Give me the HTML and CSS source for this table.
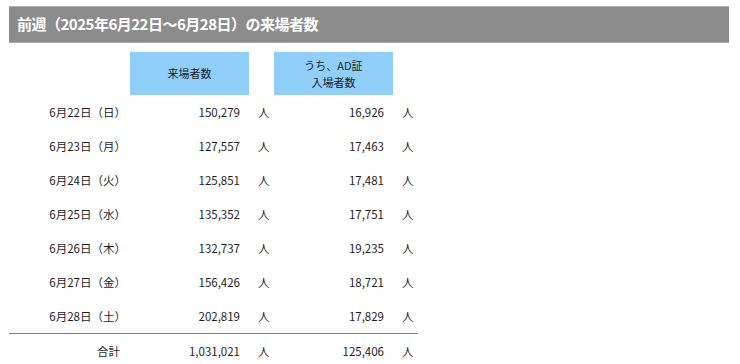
FILE: index.html
```html
<!DOCTYPE html>
<html lang="ja">
<head>
<meta charset="utf-8">
<link rel="stylesheet" href="styles.css">
</head>
<body>
<div class="page">
  <h1 class="title">前週（2025年6月22日～6月28日）の来場者数</h1>
  <div class="table">
    <div class="cell"></div>
    <div class="cell head">来場者数</div>
    <div class="cell"></div>
    <div class="cell head">うち、AD証<br>入場者数</div>
    <div class="cell"></div>

    <div class="cell date">6月22日（日）</div><div class="cell num">150,279</div><div class="cell unit">人</div><div class="cell num">16,926</div><div class="cell unit">人</div>
    <div class="cell date">6月23日（月）</div><div class="cell num">127,557</div><div class="cell unit">人</div><div class="cell num">17,463</div><div class="cell unit">人</div>
    <div class="cell date">6月24日（火）</div><div class="cell num">125,851</div><div class="cell unit">人</div><div class="cell num">17,481</div><div class="cell unit">人</div>
    <div class="cell date">6月25日（水）</div><div class="cell num">135,352</div><div class="cell unit">人</div><div class="cell num">17,751</div><div class="cell unit">人</div>
    <div class="cell date">6月26日（木）</div><div class="cell num">132,737</div><div class="cell unit">人</div><div class="cell num">19,235</div><div class="cell unit">人</div>
    <div class="cell date">6月27日（金）</div><div class="cell num">156,426</div><div class="cell unit">人</div><div class="cell num">18,721</div><div class="cell unit">人</div>
    <div class="cell date">6月28日（土）</div><div class="cell num">202,819</div><div class="cell unit">人</div><div class="cell num">17,829</div><div class="cell unit">人</div>

    <div class="cell date total">合計</div><div class="cell num total">1,031,021</div><div class="cell unit total">人</div><div class="cell num total">125,406</div><div class="cell unit total">人</div>
  </div>
</div>
</body>
</html>
```

FILE: styles.css
```css
html, body {
  margin: 0;
  padding: 0;
  background: #ffffff;
}

body {
  font-family: "Noto Sans CJK JP", "Noto Sans", sans-serif;
  color: #1e1e1e;
}

.page {
  padding: 6px 11px 0 9px;
}

.title {
  margin: 0;
  height: 37px;
  box-sizing: border-box;
  background: #8c8c8c;
  border-top: 1px solid #b4b4b4;
  border-bottom: 1px solid #a8a8a8;
  color: #ffffff;
  font-size: 15px;
  font-weight: 700;
  line-height: 34px;
  padding-left: 8px;
  letter-spacing: -0.5px;
}

.table {
  display: grid;
  grid-template-columns: 121px 119px 25px 119px 25px;
  grid-template-rows: 43px repeat(7, 34px) 35px;
  margin-top: 9px;
  width: 409px;
  font-size: 11.5px;
}

.cell {
  display: flex;
  align-items: center;
  white-space: nowrap;
}

.head {
  background: #90cff9;
  justify-content: center;
  text-align: center;
  font-size: 11px;
  line-height: 17px;
}

.date {
  justify-content: flex-end;
  padding-right: 4px;
}

.num {
  justify-content: flex-end;
  padding-right: 9px;
}

.unit {
  padding-left: 9px;
}

.total {
  border-top: 1px solid #808080;
}

.date.total {
  padding-right: 10px;
}
```
